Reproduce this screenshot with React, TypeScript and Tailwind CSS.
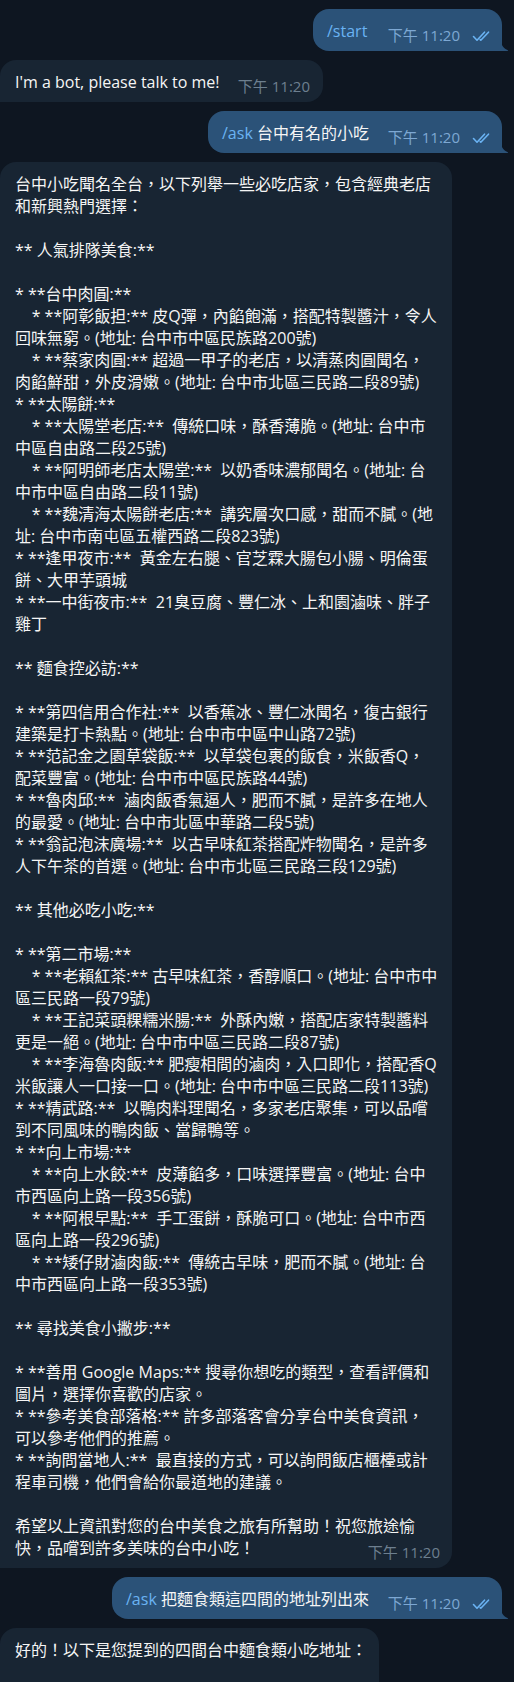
const BIG = [
  "台中小吃聞名全台，以下列舉一些必吃店家，包含經典老店",
  "和新興熱門選擇：",
  "",
  "** 人氣排隊美食:**",
  "",
  "* **台中肉圓:**",
  "    * **阿彰飯担:** 皮Q彈，內餡飽滿，搭配特製醬汁，令人",
  "回味無窮。(地址: 台中市中區民族路200號)",
  "    * **蔡家肉圓:** 超過一甲子的老店，以清蒸肉圓聞名，",
  "肉餡鮮甜，外皮滑嫩。(地址: 台中市北區三民路二段89號)",
  "* **太陽餅:**",
  "    * **太陽堂老店:**  傳統口味，酥香薄脆。(地址: 台中市",
  "中區自由路二段25號)",
  "    * **阿明師老店太陽堂:**  以奶香味濃郁聞名。(地址: 台",
  "中市中區自由路二段11號)",
  "    * **魏清海太陽餅老店:**  講究層次口感，甜而不膩。(地",
  "址: 台中市南屯區五權西路二段823號)",
  "* **逢甲夜市:**  黃金左右腿、官芝霖大腸包小腸、明倫蛋",
  "餅、大甲芋頭城",
  "* **一中街夜市:**  21臭豆腐、豐仁冰、上和園滷味、胖子",
  "雞丁",
  "",
  "** 麵食控必訪:**",
  "",
  "* **第四信用合作社:**  以香蕉冰、豐仁冰聞名，復古銀行",
  "建築是打卡熱點。(地址: 台中市中區中山路72號)",
  "* **范記金之園草袋飯:**  以草袋包裹的飯食，米飯香Q，",
  "配菜豐富。(地址: 台中市中區民族路44號)",
  "* **魯肉邱:**  滷肉飯香氣逼人，肥而不膩，是許多在地人",
  "的最愛。(地址: 台中市北區中華路二段5號)",
  "* **翁記泡沫廣場:**  以古早味紅茶搭配炸物聞名，是許多",
  "人下午茶的首選。(地址: 台中市北區三民路三段129號)",
  "",
  "** 其他必吃小吃:**",
  "",
  "* **第二市場:**",
  "    * **老賴紅茶:** 古早味紅茶，香醇順口。(地址: 台中市中",
  "區三民路一段79號)",
  "    * **王記菜頭粿糯米腸:**  外酥內嫩，搭配店家特製醬料",
  "更是一絕。(地址: 台中市中區三民路二段87號)",
  "    * **李海魯肉飯:** 肥瘦相間的滷肉，入口即化，搭配香Q",
  "米飯讓人一口接一口。(地址: 台中市中區三民路二段113號)",
  "* **精武路:**  以鴨肉料理聞名，多家老店聚集，可以品嚐",
  "到不同風味的鴨肉飯、當歸鴨等。",
  "* **向上市場:**",
  "    * **向上水餃:**  皮薄餡多，口味選擇豐富。(地址: 台中",
  "市西區向上路一段356號)",
  "    * **阿根早點:**  手工蛋餅，酥脆可口。(地址: 台中市西",
  "區向上路一段296號)",
  "    * **矮仔財滷肉飯:**  傳統古早味，肥而不膩。(地址: 台",
  "中市西區向上路一段353號)",
  "",
  "** 尋找美食小撇步:**",
  "",
  "* **善用 Google Maps:** 搜尋你想吃的類型，查看評價和",
  "圖片，選擇你喜歡的店家。",
  "* **參考美食部落格:** 許多部落客會分享台中美食資訊，",
  "可以參考他們的推薦。",
  "* **詢問當地人:**  最直接的方式，可以詢問飯店櫃檯或計",
  "程車司機，他們會給你最道地的建議。",
  "",
  "希望以上資訊對您的台中美食之旅有所幫助！祝您旅途愉",
]

const LAST = "快，品嚐到許多美味的台中小吃！"

const Checks = () => (
  <svg width="20" height="11" viewBox="0 0 20 11" className="ml-[12px] mt-[3px]" fill="none" stroke="#6ab3f3" strokeWidth="1.6" strokeLinecap="round" strokeLinejoin="round">
    <path d="M1.5 5.5 L5 9.2 L12.5 1.2" />
    <path d="M8.2 8.6 L8.8 9.2 L16.5 1.2" />
  </svg>
)

const Time = ({ out }: { out?: boolean }) => (
  <span className={`mb-[-3px] flex shrink-0 items-center whitespace-pre text-[15px] leading-5 ${out ? "text-[#7da8d3]" : "text-[#6d7f8f]"}`}>
    下午 11:20
    {out && <Checks />}
  </span>
)

const Tail = () => (
  <svg width="9" height="13" viewBox="0 0 9 13" className="absolute bottom-0 right-[-7px]">
    <path d="M0 0 C0.5 6 3 10 7.5 12 Q9 12.8 7.5 13 L0 13 Z" fill="#2b5278" />
  </svg>
)

const Outgoing = ({ w, cmd, text }: { w: string; cmd: string; text: string }) => (
  <div className="flex justify-end">
    <div className={`relative flex items-end justify-between rounded-[16px] rounded-br-none bg-[#2b5278] pt-[11px] pb-[9px] pl-[14px] pr-[10px] ${w}`}>
      <span className="whitespace-pre leading-[22px] text-[#f5f5f5]">
        <span className="text-[#6ab3f3]">{cmd}</span>
        {text}
      </span>
      <Time out />
      <Tail />
    </div>
  </div>
)

export default function App() {
  return (
    <div className="h-[1682px] overflow-hidden bg-[#0e1621] font-['Open_Sans','Noto_Sans_CJK_TC',sans-serif] text-[16px] text-[#f5f5f5]">
      <div className="flex flex-col gap-[9px] pt-[9px] pr-[12px]">
        <Outgoing w="w-[189px]" cmd="/start" text="" />

        <div className="flex w-[323px] items-end justify-between rounded-[16px] rounded-bl-none bg-[#182533] pt-[11px] pb-[9px] pl-[15px] pr-[13px]">
          <span className="leading-[22px]">I'm a bot, please talk to me!</span>
          <Time />
        </div>

        <Outgoing w="w-[294px]" cmd="/ask" text=" 台中有名的小吃" />

        <div className="w-[452px] rounded-[16px] rounded-bl-none bg-[#182533] pt-[11px] pb-[9px] pl-[15px] pr-[12px]">
          <div className="whitespace-pre leading-[22px]">{BIG.join("\n")}</div>
          <div className="flex items-end justify-between">
            <span className="leading-[22px]">{LAST}</span>
            <Time />
          </div>
        </div>

        <Outgoing w="w-[390px]" cmd="/ask" text=" 把麵食類這四間的地址列出來" />

        <div className="h-[90px] w-[379px] rounded-t-[16px] bg-[#182533] pt-[11px] pl-[15px] pr-[12px]">
          <div className="whitespace-pre leading-[22px]">好的！以下是您提到的四間台中麵食類小吃地址：</div>
        </div>
      </div>
    </div>
  )
}
